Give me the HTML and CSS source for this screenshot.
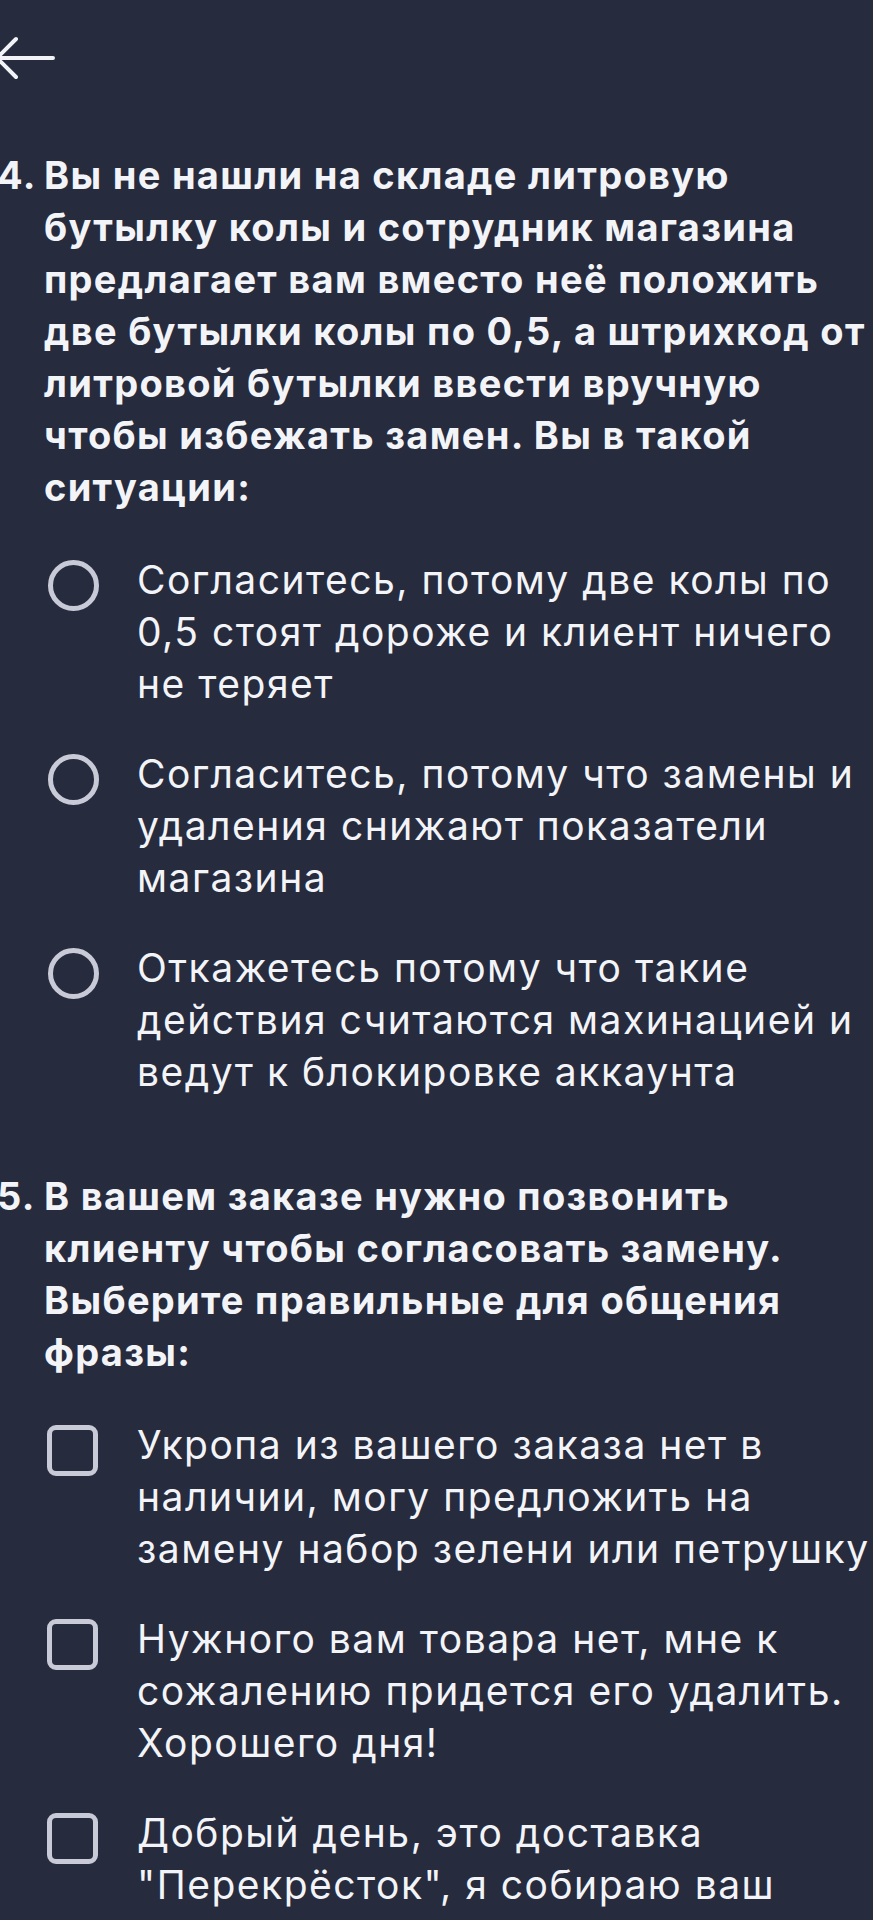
FILE: index.html
```html
<!DOCTYPE html>
<html lang="ru">
<head>
<meta charset="utf-8">
<title>Тест</title>
<link rel="stylesheet" href="styles.css">
</head>
<body>
<div class="page">
  <header class="topbar">
    <svg class="back" width="62" height="44" viewBox="0 0 62 44" fill="none" stroke="#f2f3f7" stroke-width="4" stroke-linecap="round" stroke-linejoin="round">
      <path d="M2 22 H58 M2 22 L21 3 M2 22 L21 41"/>
    </svg>
  </header>

  <section class="question">
    <div class="q-title"><span class="q-num">4.</span><span class="q-text">Вы не нашли на складе литровую<br>бутылку колы и сотрудник магазина<br>предлагает вам вместо неё положить<br>две бутылки колы по 0,5, а штрихкод от<br>литровой бутылки ввести вручную<br>чтобы избежать замен. Вы в такой<br>ситуации:</span></div>
    <div class="options">
      <div class="option"><span class="radio"></span><span class="opt-text">Согласитесь, потому две колы по<br>0,5 стоят дороже и клиент ничего<br>не теряет</span></div>
      <div class="option"><span class="radio"></span><span class="opt-text">Согласитесь, потому что замены и<br>удаления снижают показатели<br>магазина</span></div>
      <div class="option"><span class="radio"></span><span class="opt-text">Откажетесь потому что такие<br>действия считаются махинацией и<br>ведут к блокировке аккаунта</span></div>
    </div>
  </section>

  <section class="question q5">
    <div class="q-title"><span class="q-num">5.</span><span class="q-text">В вашем заказе нужно позвонить<br>клиенту чтобы согласовать замену.<br>Выберите правильные для общения<br>фразы:</span></div>
    <div class="options">
      <div class="option"><span class="check"></span><span class="opt-text">Укропа из вашего заказа нет в<br>наличии, могу предложить на<br>замену набор зелени или петрушку</span></div>
      <div class="option"><span class="check"></span><span class="opt-text">Нужного вам товара нет, мне к<br>сожалению придется его удалить.<br>Хорошего дня!</span></div>
      <div class="option"><span class="check"></span><span class="opt-text">Добрый день, это доставка<br>"Перекрёсток", я собираю ваш<br>заказ</span></div>
    </div>
  </section>
</div>
</body>
</html>
```
FILE: styles.css
```css
html, body {
  margin: 0;
  padding: 0;
  background: #262b3e;
}
body {
  font-family: Inter, "Noto Sans", "DejaVu Sans", sans-serif;
  color: #f3f4f8;
  overflow: hidden;
}
.page {
  width: 873px;
  height: 1920px;
  overflow: hidden;
  padding-top: 36px;
  box-sizing: border-box;
}
.topbar {
  height: 44px;
  margin-left: -5px;
}
.back {
  display: block;
}
.question {
  margin-top: 69px;
}
.q5 {
  margin-top: 72px;
}
.q-title {
  display: flex;
  font-weight: 700;
  font-size: 38px;
  letter-spacing: 1.3px;
  line-height: 52px;
  white-space: nowrap;
}
.q-num {
  flex: none;
  width: 47px;
  margin-left: -3px;
}
.options {
  margin-top: 41px;
  display: flex;
  flex-direction: column;
  gap: 38px;
}
.option {
  display: flex;
  align-items: flex-start;
  font-size: 39px;
  letter-spacing: 1.5px;
  line-height: 52px;
  white-space: nowrap;
}
.radio {
  flex: none;
  width: 51px;
  height: 51px;
  box-sizing: border-box;
  border: 5px solid #c9cad7;
  border-radius: 50%;
  margin-left: 48px;
  margin-right: 38px;
  margin-top: 6px;
}
.check {
  flex: none;
  width: 51px;
  height: 51px;
  box-sizing: border-box;
  border: 5px solid #c9cad7;
  border-radius: 9px;
  margin-left: 47px;
  margin-right: 39px;
  margin-top: 6px;
}
.opt-text {
  display: block;
}
```
